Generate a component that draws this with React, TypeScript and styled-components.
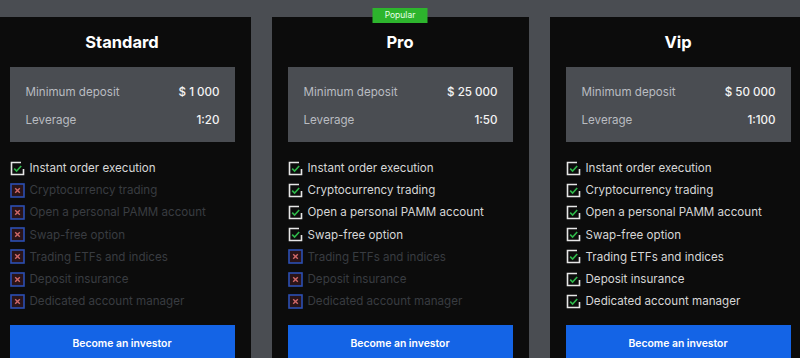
import React from "react";
import styled, { createGlobalStyle } from "styled-components";

const Global = createGlobalStyle`
  html, body { margin: 0; padding: 0; background: #4a4d52; overflow: hidden; }
  body { font-family: Inter, "Noto Sans", sans-serif; }
`;

const Page = styled.div`
  width: 800px;
  height: 358px;
  display: flex;
  justify-content: center;
  overflow: hidden;
  background: #4a4d52;
  padding-top: 17px;
  box-sizing: border-box;
`;

const Row = styled.div`
  display: flex;
  gap: 21px;
  flex-shrink: 0;
`;

const Card = styled.div`
  position: relative;
  width: 257px;
  flex-shrink: 0;
  background: #0c0c0c;
  box-sizing: border-box;
  padding: 14px 16px 0;
  display: flex;
  flex-direction: column;
  height: 360px;
`;

const Badge = styled.div`
  position: absolute;
  top: -9px;
  left: 50%;
  transform: translateX(-50%);
  width: 55px;
  height: 15px;
  background: #2db52d;
  color: #e8ffe8;
  font-size: 8.5px;
  line-height: 15px;
  text-align: center;
  font-weight: 400;
`;

const Title = styled.h2`
  margin: 0;
  text-align: center;
  color: #ffffff;
  font-size: 16.5px;
  font-weight: 700;
  line-height: 22px;
`;

const InfoBox = styled.div`
  margin-top: 14px;
  background: #4a4d52;
  padding: 16px 15px 13px 16px;
  display: flex;
  flex-direction: column;
  gap: 10px;
`;

const InfoRow = styled.div`
  display: flex;
  justify-content: space-between;
  align-items: center;
  font-size: 11.6px;
  line-height: 18px;
`;

const Label = styled.span`
  color: #b9bcc1;
`;

const Value = styled.span`
  color: #f4f4f4;
  font-weight: 500;
`;

const Features = styled.ul`
  list-style: none;
  margin: 15px 0 0;
  padding: 0;
  display: flex;
  flex-direction: column;
`;

const Feature = styled.li<{ $on: boolean }>`
  display: flex;
  align-items: center;
  gap: 5px;
  height: 22.2px;
  font-size: 11.6px;
  color: ${(p) => (p.$on ? "#d6d6d6" : "#393c41")};
`;

const Button = styled.button`
  margin-top: 13px;
  height: 44px;
  border: none;
  background: #1464e6;
  color: #ffffff;
  font-family: Inter, "Noto Sans", sans-serif;
  font-size: 10.4px;
  font-weight: 600;
  padding: 0 0 8px;
  cursor: pointer;
`;

const CheckIcon = () => (
  <svg width="15" height="15" viewBox="0 0 15 15" style={{ flexShrink: 0 }}>
    <path d="M11 1.5 H1.5 V13.5 H13.5 V8" fill="none" stroke="#e6e6e6" strokeWidth="1.6" />
    <path d="M4.2 7.6 L6.6 10 L11.2 5" fill="none" stroke="#2fb84a" strokeWidth="1.6" />
  </svg>
);

const CrossIcon = () => (
  <svg width="15" height="15" viewBox="0 0 15 15" style={{ flexShrink: 0 }}>
    <rect x="1" y="1" width="13" height="13" fill="#2a1418" stroke="#2c4fb3" strokeWidth="1.6" />
    <path d="M5.2 5.2 L9.8 9.8 M9.8 5.2 L5.2 9.8" stroke="#d06868" strokeWidth="1.4" />
  </svg>
);

const FEATURES = [
  "Instant order execution",
  "Cryptocurrency trading",
  "Open a personal PAMM account",
  "Swap-free option",
  "Trading ETFs and indices",
  "Deposit insurance",
  "Dedicated account manager",
];

const plans = [
  { name: "Standard", deposit: "$ 1 000", leverage: "1:20", enabled: 1 },
  { name: "Pro", deposit: "$ 25 000", leverage: "1:50", enabled: 4, popular: true },
  { name: "Vip", deposit: "$ 50 000", leverage: "1:100", enabled: 7 },
];

export default function App() {
  return (
    <>
      <Global />
      <Page>
        <Row>
          {plans.map((p) => (
            <Card key={p.name}>
              {p.popular && <Badge>Popular</Badge>}
              <Title>{p.name}</Title>
              <InfoBox>
                <InfoRow>
                  <Label>Minimum deposit</Label>
                  <Value>{p.deposit}</Value>
                </InfoRow>
                <InfoRow>
                  <Label>Leverage</Label>
                  <Value>{p.leverage}</Value>
                </InfoRow>
              </InfoBox>
              <Features>
                {FEATURES.map((f, i) => {
                  const on = i < p.enabled;
                  return (
                    <Feature key={f} $on={on}>
                      {on ? <CheckIcon /> : <CrossIcon />}
                      {f}
                    </Feature>
                  );
                })}
              </Features>
              <Button>Become an investor</Button>
            </Card>
          ))}
        </Row>
      </Page>
    </>
  );
}
